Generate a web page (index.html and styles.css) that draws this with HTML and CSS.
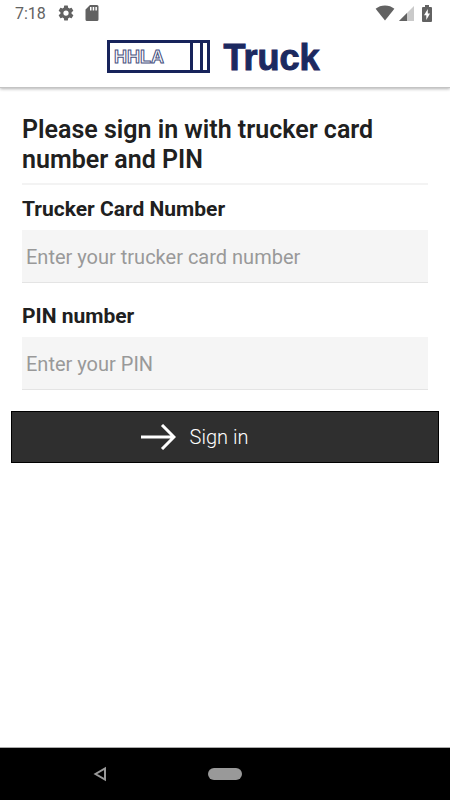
FILE: index.html
```html
<!DOCTYPE html>
<html lang="en">
<head>
<meta charset="utf-8">
<meta name="viewport" content="width=device-width, initial-scale=1">
<title>HHLA Truck</title>
<link rel="stylesheet" href="styles.css">
</head>
<body>
<header class="top">
  <div class="status">
    <span class="clock">7:18</span>
    <svg class="gear" width="18" height="18" viewBox="0 0 24 24" aria-hidden="true"><path d="M19.4 13a7.500 7.500 0 0 0 0-2l2.100-1.650a.5.5 0 0 0 .12-.64l-2-3.460a.5.5 0 0 0-.61-.22l-2.490 1a7.300 7.300 0 0 0-1.690-.98l-.38-2.650A.5.5 0 0 0 14 2h-4a.5.5 0 0 0-.49.42l-.38 2.650c-.61.25-1.170.59-1.690.98l-2.490-1a.5.5 0 0 0-.61.22l-2 3.460a.5.5 0 0 0 .12.64L4.600 11a7.500 7.500 0 0 0 0 2l-2.110 1.650a.5.5 0 0 0-.12.64l2 3.460c.12.22.39.3.61.22l2.490-1c.52.4 1.080.73 1.690.98l.38 2.650c.03.24.24.42.49.42h4c.25 0 .46-.18.49-.42l.38-2.650c.61-.25 1.170-.59 1.690-.98l2.490 1c.23.09.49 0 .61-.22l2-3.460a.5.5 0 0 0-.12-.64zM12 15.500a3.500 3.500 0 1 1 0-7 3.500 3.500 0 0 1 0 7z"/></svg>
    <svg class="card" width="14" height="16" viewBox="0 0 14 16" aria-hidden="true"><path fill-rule="evenodd" d="M5 0h7a1.500 1.500 0 0 1 1.500 1.500v13A1.500 1.500 0 0 1 12 16H2A1.500 1.500 0 0 1 .5 14.500V4.500zM5 2v3.500h1.500V2zM7.700 2v3.500h1.500V2zM10.400 2v3.500h1.500V2z"/></svg>
    <svg class="wifi" width="20" height="16" viewBox="0 0 20 16" aria-hidden="true"><path d="M10 15.500L.6 3.800C3.200 1.700 6.400.5 10 .5s6.800 1.200 9.400 3.300z"/></svg>
    <svg width="15" height="15" viewBox="0 0 15 15" aria-hidden="true"><path class="faint" d="M15 0v15H0z"/><path d="M8 7v8H0z"/></svg>
    <svg class="battery" width="10" height="17" viewBox="0 0 10 17" aria-hidden="true"><path fill-rule="evenodd" d="M3 0h4v2h2a1 1 0 0 1 1 1v13a1 1 0 0 1-1 1H1a1 1 0 0 1-1-1V3a1 1 0 0 1 1-1h2zM5.800 4L2 10.200h2.300V15L8 8.600H5.800z"/></svg>
  </div>
  <div class="brand">
    <svg width="103" height="33" viewBox="0 0 103 33" role="img" aria-label="HHLA">
      <path class="frame" d="M1.500 1.500h100v30h-100zM84.500 1v31M94.500 1v31"/>
      <text class="mark" x="7" y="23">HHLA</text>
    </svg>
    <span class="product">Truck</span>
  </div>
</header>
<main>
  <form>
    <h1>Please sign in with trucker card number and PIN</h1>
    <div class="field">
      <label for="card">Trucker Card Number</label>
      <input id="card" type="text" placeholder="Enter your trucker card number">
    </div>
    <div class="field">
      <label for="pin">PIN number</label>
      <input id="pin" type="password" placeholder="Enter your PIN">
    </div>
    <button type="submit">
      <svg width="35" height="26" viewBox="0 0 35 26" aria-hidden="true"><path d="M0 13h33M21 1l12 12-12 12"/></svg>
      <span>Sign in</span>
    </button>
  </form>
</main>
<nav class="system">
  <svg class="back" width="14" height="16" viewBox="0 0 14 16" aria-hidden="true"><path d="M12 2.500v11L2.500 8z"/></svg>
  <span class="home"></span>
</nav>
</body>
</html>
```
FILE: styles.css
```css
* {
  box-sizing: border-box;
}

body {
  margin: 0;
  min-height: 100vh;
  display: flex;
  flex-direction: column;
  background: #fff;
  color: #202020;
  font-family: Roboto, "Liberation Sans", sans-serif;
}

.top {
  padding-bottom: 14px;
  border-bottom: 1px solid #c4c4c4;
  box-shadow: 0 1px 3px rgba(0, 0, 0, 0.3);
}

.status {
  display: flex;
  align-items: center;
  height: 28px;
  padding: 0 18px 2px 15px;
  fill: #626262;
}

.clock {
  color: #626262;
  font-size: 16px;
}

.gear {
  margin-left: 11px;
}

.card {
  margin-left: 10px;
}

.wifi {
  margin-left: auto;
  margin-right: 4px;
}

.battery {
  margin-left: 8px;
}

.faint {
  fill: #cacaca;
}

.brand {
  display: flex;
  align-items: center;
  justify-content: center;
  gap: 13px;
  height: 33px;
  margin-top: 12px;
  padding-right: 23px;
}

.frame {
  fill: none;
  stroke: #17235b;
  stroke-width: 3;
}

.mark {
  fill: #fff;
  stroke: #46507e;
  stroke-width: 1;
  font: bold 18px "Liberation Sans", sans-serif;
}

.product {
  padding-top: 2px;
  color: #1c2960;
  -webkit-text-stroke: 1px #1c2960;
  font: bold 36px/33px "Liberation Sans", sans-serif;
}

main {
  flex: 1;
  padding: 27px 11px;
}

h1 {
  margin: 0 11px 10px;
  padding-bottom: 8px;
  border-bottom: 2px solid #f3f3f3;
  font-size: 25px;
  font-weight: 600;
  line-height: 30px;
}

.field {
  margin: 0 11px 19px;
}

label {
  display: block;
  margin-bottom: 7px;
  font-size: 21px;
  font-weight: 700;
  line-height: 28px;
}

input {
  display: block;
  width: 100%;
  height: 53px;
  padding: 1px 4px 0;
  border: 0;
  border-bottom: 1px solid #e4e4e4;
  background: #f5f5f5;
  color: #202020;
  font: 20px Roboto, "Liberation Sans", sans-serif;
}

input::placeholder {
  color: #999;
}

button {
  display: flex;
  align-items: center;
  justify-content: center;
  gap: 14px;
  width: 100%;
  height: 52px;
  margin-top: 21px;
  padding: 0 61px 0 0;
  border: 1px solid #000;
  background: #2f2f2f;
  color: #fff;
  font: 300 20px Roboto, "Liberation Sans", sans-serif;
}

button path {
  fill: none;
  stroke: #fff;
  stroke-width: 3;
}

.system {
  display: grid;
  grid-template-columns: 1fr 34px 1fr;
  align-items: center;
  height: 53px;
  border-top: 1px solid #aaa;
  background: #000;
}

.back {
  justify-self: center;
  margin-right: 8px;
  fill: none;
  stroke: #999;
  stroke-width: 2;
}

.home {
  height: 12px;
  border-radius: 6px;
  background: #999;
}
```
